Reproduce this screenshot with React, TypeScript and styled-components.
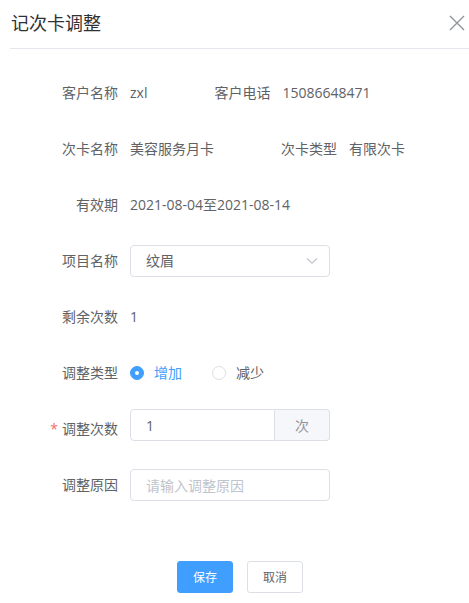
import React from "react";
import styled, { createGlobalStyle } from "styled-components";

const GlobalStyle = createGlobalStyle`
  html, body {
    margin: 0;
    padding: 0;
    background: #fff;
    overflow: hidden;
  }
  body {
    font-family: "Open Sans", "Noto Sans CJK SC", sans-serif;
    color: #606266;
    font-size: 14px;
  }
  * {
    box-sizing: border-box;
  }
`;

const Dialog = styled.div`
  width: 480px;
`;

const Header = styled.div`
  display: flex;
  align-items: center;
  justify-content: space-between;
  box-sizing: content-box;
  height: 45px;
  padding-bottom: 3px;
  margin: 0 10px;
  border-bottom: 1px solid #e4e7ed;
`;

const Title = styled.span`
  font-size: 18px;
  line-height: 24px;
  color: #303133;
  padding-left: 1px;
`;

const CloseButton = styled.button`
  display: flex;
  border: 0;
  background: none;
  padding: 0;
  margin-right: 5px;
  cursor: pointer;
`;

const Form = styled.div`
  padding: 28px 0 0 30px;
`;

const Row = styled.div`
  display: flex;
  margin-bottom: 24px;
`;

const Item = styled.div<{ $gap?: number }>`
  display: flex;
  align-items: center;
  height: 32px;
  margin-left: ${(p) => p.$gap ?? 0}px;
`;

const Label = styled.label<{ $required?: boolean }>`
  width: 100px;
  padding-right: 12px;
  text-align: right;
  line-height: 20px;
  color: #606266;

  &::before {
    content: ${(p) => (p.$required ? '"*"' : "none")};
    color: #f56c6c;
    margin-right: 4px;
  }
`;

const Value = styled.span`
  line-height: 20px;
  color: #606266;
`;

const SelectBox = styled.div`
  display: flex;
  align-items: center;
  justify-content: space-between;
  width: 200px;
  height: 32px;
  padding: 0 11px 0 15px;
  border: 1px solid #dcdfe6;
  border-radius: 4px;
  color: #606266;
  line-height: 20px;
`;

const RadioGroup = styled.div`
  display: flex;
  align-items: center;
`;

const Radio = styled.label<{ $checked?: boolean }>`
  display: flex;
  align-items: center;
  margin-right: 30px;
  line-height: 20px;
  color: ${(p) => (p.$checked ? "#409eff" : "#606266")};
  cursor: pointer;
`;

const RadioDot = styled.span<{ $checked?: boolean }>`
  position: relative;
  width: 14px;
  height: 14px;
  margin-right: 10px;
  border-radius: 50%;
  border: 1px solid ${(p) => (p.$checked ? "#409eff" : "#dcdfe6")};
  background: ${(p) => (p.$checked ? "#409eff" : "#fff")};

  &::after {
    content: "";
    position: absolute;
    left: 50%;
    top: 50%;
    width: 4px;
    height: 4px;
    border-radius: 50%;
    background: #fff;
    transform: translate(-50%, -50%);
    display: ${(p) => (p.$checked ? "block" : "none")};
  }
`;

const InputGroup = styled.div<{ $raised?: boolean }>`
  display: flex;
  width: 200px;
  height: 32px;
  margin-top: ${(p) => (p.$raised ? "-8px" : "0")};
`;

const Input = styled.input<{ $hasAppend?: boolean }>`
  flex: 1;
  min-width: 0;
  height: 32px;
  padding: 0 15px;
  border: 1px solid #dcdfe6;
  border-radius: ${(p) => (p.$hasAppend ? "4px 0 0 4px" : "4px")};
  font: inherit;
  font-size: 14px;
  color: #606266;
  outline: none;

  &::placeholder {
    color: #c0c4cc;
  }
`;

const Append = styled.div`
  display: flex;
  align-items: center;
  justify-content: center;
  width: 55px;
  border: 1px solid #dcdfe6;
  border-left: 0;
  border-radius: 0 4px 4px 0;
  background: #f5f7fa;
  color: #909399;
`;

const Footer = styled.div`
  display: flex;
  justify-content: center;
  gap: 14px;
  padding-top: 36px;
`;

const Button = styled.button<{ $primary?: boolean }>`
  width: 56px;
  height: 32px;
  padding: 0;
  border-radius: 3px;
  font-family: inherit;
  font-size: 12px;
  cursor: pointer;
  border: 1px solid ${(p) => (p.$primary ? "#409eff" : "#dcdfe6")};
  background: ${(p) => (p.$primary ? "#409eff" : "#fff")};
  color: ${(p) => (p.$primary ? "#fff" : "#606266")};
`;

const CloseIcon = () => (
  <svg width="16" height="16" viewBox="0 0 16 16">
    <path d="M1 1 L15 15 M15 1 L1 15" stroke="#909399" strokeWidth="1.4" fill="none" />
  </svg>
);

const Chevron = () => (
  <svg width="12" height="8" viewBox="0 0 12 8">
    <path d="M1 1.5 L6 6.2 L11 1.5" stroke="#c0c4cc" strokeWidth="1.1" fill="none" />
  </svg>
);

const App = () => {
  const [type, setType] = React.useState("add");

  return (
    <Dialog>
      <GlobalStyle />
      <Header>
        <Title>记次卡调整</Title>
        <CloseButton aria-label="close">
          <CloseIcon />
        </CloseButton>
      </Header>
      <Form>
        <Row>
          <Item>
            <Label>客户名称</Label>
            <Value>zxl</Value>
          </Item>
          <Item $gap={35}>
            <Label>客户电话</Label>
            <Value>15086648471</Value>
          </Item>
        </Row>
        <Row>
          <Item>
            <Label>次卡名称</Label>
            <Value>美容服务月卡</Value>
          </Item>
          <Item $gap={35}>
            <Label>次卡类型</Label>
            <Value>有限次卡</Value>
          </Item>
        </Row>
        <Row>
          <Item>
            <Label>有效期</Label>
            <Value>2021-08-04至2021-08-14</Value>
          </Item>
        </Row>
        <Row>
          <Item>
            <Label>项目名称</Label>
            <SelectBox>
              <span>纹眉</span>
              <Chevron />
            </SelectBox>
          </Item>
        </Row>
        <Row>
          <Item>
            <Label>剩余次数</Label>
            <Value>1</Value>
          </Item>
        </Row>
        <Row>
          <Item>
            <Label>调整类型</Label>
            <RadioGroup>
              <Radio $checked={type === "add"} onClick={() => setType("add")}>
                <RadioDot $checked={type === "add"} />
                增加
              </Radio>
              <Radio $checked={type === "sub"} onClick={() => setType("sub")}>
                <RadioDot $checked={type === "sub"} />
                减少
              </Radio>
            </RadioGroup>
          </Item>
        </Row>
        <Row>
          <Item>
            <Label $required>调整次数</Label>
            <InputGroup $raised>
              <Input $hasAppend defaultValue="1" />
              <Append>次</Append>
            </InputGroup>
          </Item>
        </Row>
        <Row>
          <Item>
            <Label>调整原因</Label>
            <InputGroup>
              <Input placeholder="请输入调整原因" />
            </InputGroup>
          </Item>
        </Row>
      </Form>
      <Footer>
        <Button $primary>保存</Button>
        <Button>取消</Button>
      </Footer>
    </Dialog>
  );
};

export default App;
